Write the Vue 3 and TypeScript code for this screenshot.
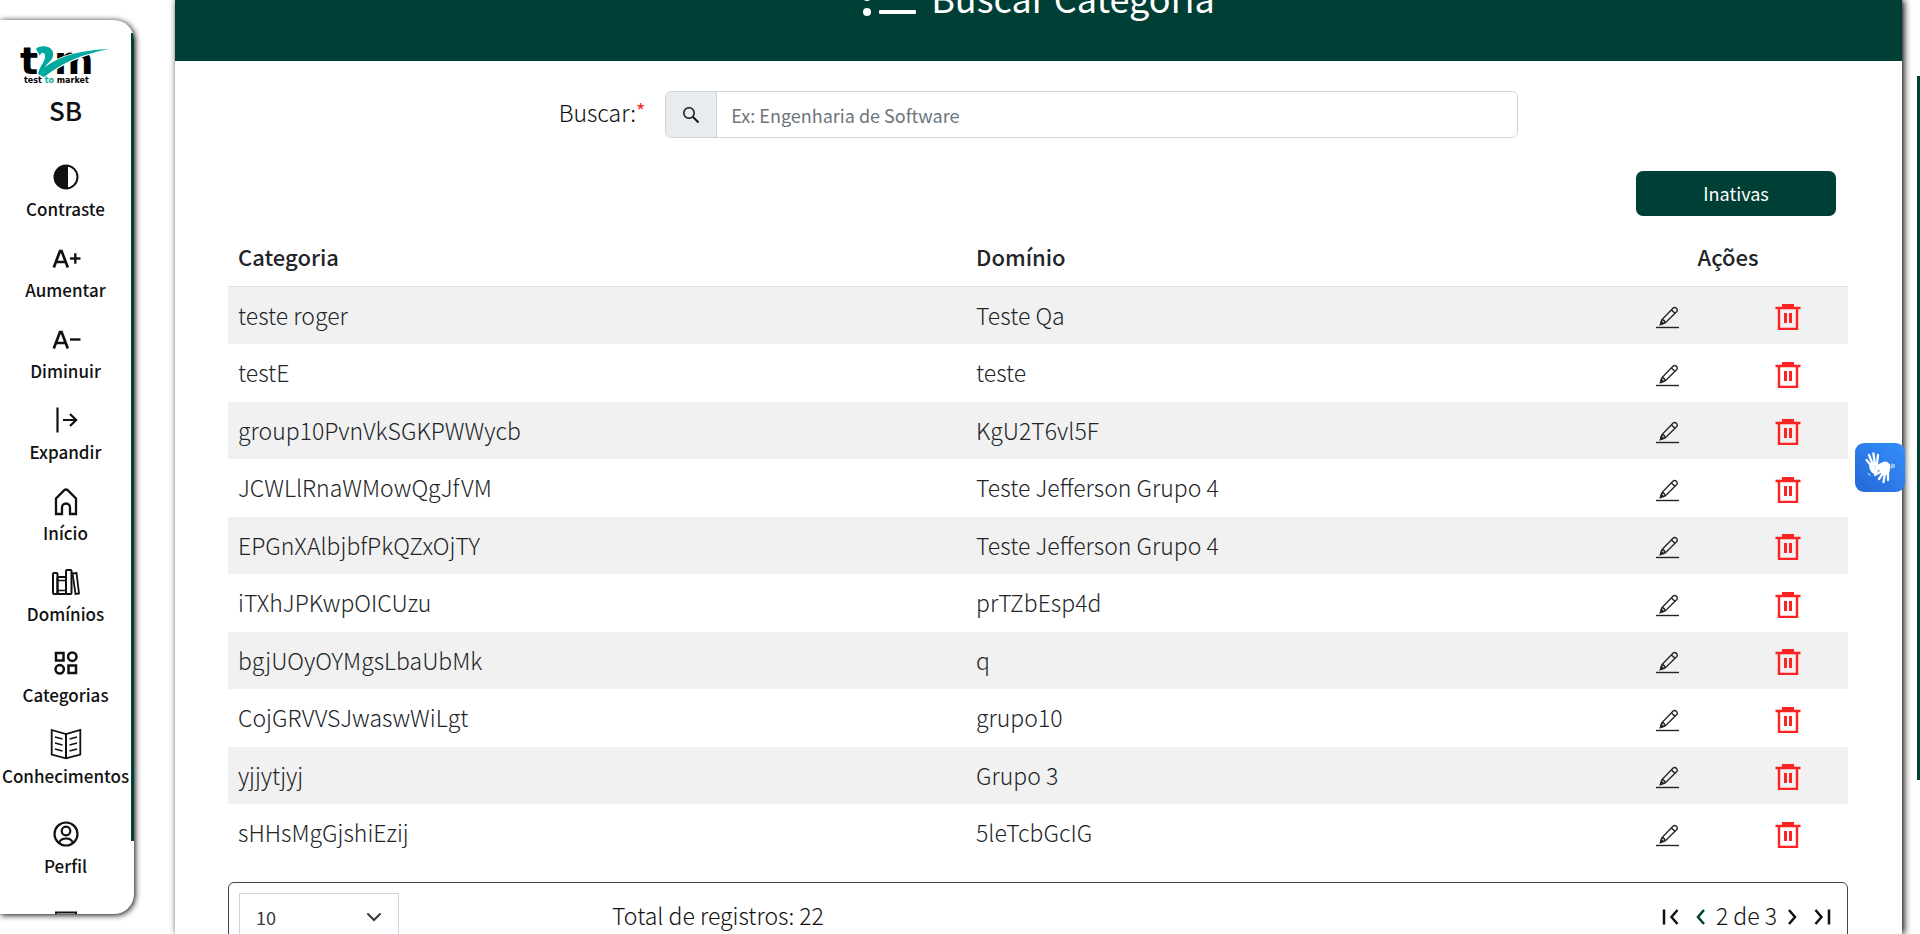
<script setup lang="ts">
interface Row { categoria: string; dominio: string }
interface NavItem { label: string; icon: string }

const rows: Row[] = [
  { categoria: 'teste roger', dominio: 'Teste Qa' },
  { categoria: 'testE', dominio: 'teste' },
  { categoria: 'group10PvnVkSGKPWWycb', dominio: 'KgU2T6vl5F' },
  { categoria: 'JCWLlRnaWMowQgJfVM', dominio: 'Teste Jefferson Grupo 4' },
  { categoria: 'EPGnXAlbjbfPkQZxOjTY', dominio: 'Teste Jefferson Grupo 4' },
  { categoria: 'iTXhJPKwpOICUzu', dominio: 'prTZbEsp4d' },
  { categoria: 'bgjUOyOYMgsLbaUbMk', dominio: 'q' },
  { categoria: 'CojGRVVSJwaswWiLgt', dominio: 'grupo10' },
  { categoria: 'yjjytjyj', dominio: 'Grupo 3' },
  { categoria: 'sHHsMgGjshiEzij', dominio: '5leTcbGcIG' },
]

const items: NavItem[] = [
  { label: 'Contraste', icon: 'contrast' },
  { label: 'Aumentar', icon: 'plus' },
  { label: 'Diminuir', icon: 'minus' },
  { label: 'Expandir', icon: 'expand' },
  { label: 'Início', icon: 'home' },
  { label: 'Domínios', icon: 'books' },
  { label: 'Categorias', icon: 'category' },
  { label: 'Conhecimentos', icon: 'book' },
  { label: 'Perfil', icon: 'user' },
]
</script>

<template>
  <div class="page">
    <aside class="sidebar">
      <nav class="side-scroll">
        <svg class="logo" viewBox="0 0 90 42" role="img" aria-label="t2m test to market">
          <text x="-1" y="29" class="logo-big">t</text>
          <text x="33" y="29" class="logo-big">m</text>
          <path d="M15 4C18 0 31 0 32 8C33 15 27 17 24 22C42 9 64 5 88 4C62 9 42 17 23 32L17 29C19 20 25 16 24 10C23 6 19 8 19 11Z" fill="none" stroke="#fff" stroke-width="2" />
          <path class="teal" d="M15 4C18 0 31 0 32 8C33 15 27 17 24 22C42 9 64 5 88 4C62 9 42 17 23 32L17 29C19 20 25 16 24 10C23 6 19 8 19 11Z" />
          <text x="3" y="38" class="logo-small">test <tspan class="teal">to</tspan> market</text>
        </svg>
        <strong class="initials">SB</strong>
        <a v-for="it in items" :key="it.label" href="#" class="nav-item" :class="{ last: it.icon === 'user' }">
          <svg class="nav-icon" viewBox="0 0 32 32" fill="none" stroke="currentColor" stroke-width="2" aria-hidden="true">
            <template v-if="it.icon === 'contrast'">
              <circle cx="16" cy="16" r="11.5" /><path d="M18 4.5H16a11.5 11.5 0 0 0 0 23h2Z" fill="currentColor" stroke="none" />
            </template>
            <template v-else-if="it.icon === 'plus' || it.icon === 'minus'">
              <path d="M3.800 25.500 10 9h1.600L17.800 25.500M6 20h9.600" stroke-width="2.700" /><path d="M20 16.500h10.500" stroke-width="2.400" />
              <path v-if="it.icon === 'plus'" d="M25.300 11.300v10.400" stroke-width="2.400" />
            </template>
            <path v-else-if="it.icon === 'expand'" d="M7.500 3.500v25M13 16h13M20 10l6.200 6L20 22" stroke-width="2.200" />
            <path v-else-if="it.icon === 'home'" d="M6 29V13.500L14.500 5q1.500-1 3 0L26 13.500V29h-6v-6.500a4 4 0 0 0-8 0V29Z" stroke-width="2.300" />
            <template v-else-if="it.icon === 'books'">
              <rect x="3" y="7" width="4.500" height="21" rx="1" />
              <rect x="7.500" y="11" width="8.500" height="17" rx="1" />
              <path d="M7.500 14.500H16M7.500 24.500H16" stroke-width="1.500" />
              <rect x="16" y="4" width="5.500" height="24" rx="1" />
              <path d="M22.500 7.500 26.500 7 29 27.500 25.500 28Z" stroke-width="1.800" />
            </template>
            <template v-else-if="it.icon === 'category'">
              <path d="M6 6h7.500v7.500H6ZM18.500 18.500H26V26H18.500Z" stroke-width="2.500" />
              <circle cx="22.300" cy="9.700" r="4.200" stroke-width="2.500" /><circle cx="9.700" cy="22.300" r="4.200" stroke-width="2.500" />
            </template>
            <template v-else-if="it.icon === 'book'">
              <path d="M1.700 2 16 6 30.300 2V26.500L16 30.300 1.700 26.500Z" stroke-width="1.800" /><path d="M16 6v24" />
              <path d="m5 9 7.500 2M5 15l7.500 2M5 21l7.500 2M27 9l-7.500 2M27 15l-7.500 2M27 21l-7.500 2" stroke-width="1.700" />
            </template>
            <template v-else>
              <circle cx="16" cy="16" r="11.500" stroke-width="2.200" /><circle cx="16" cy="13" r="4.300" stroke-width="2.200" /><path d="M9 25c1-3 4-4.500 7-4.500s6 1.500 7 4.500" stroke-width="2.200" />
            </template>
          </svg>
          <span>{{ it.label }}</span>
        </a>
        <a href="#" class="nav-item exit" aria-label="Sair">
          <svg class="nav-icon" viewBox="0 0 32 32" fill="none" stroke="currentColor" stroke-width="2" aria-hidden="true"><path d="M6 6.500h20V27H6Z" /></svg>
        </a>
      </nav>
      <i class="side-thumb"></i>
    </aside>

    <main class="panel">
      <header class="banner">
        <svg class="list-icon" viewBox="0 0 54 38" fill="#fff" aria-hidden="true">
          <circle cx="5" cy="4" r="4" /><circle cx="5" cy="19" r="4" /><circle cx="5" cy="34" r="4" />
          <rect x="17" y="2" width="37" height="4" rx="1" /><rect x="17" y="17" width="37" height="4" rx="1" /><rect x="17" y="32" width="37" height="4" rx="1" />
        </svg>
        <h1>Buscar Categoria</h1>
      </header>

      <form class="search" @submit.prevent>
        <label for="busca">Buscar:<sup>*</sup></label>
        <div class="group">
          <button type="submit" class="addon" aria-label="Buscar">
            <svg viewBox="0 0 18 18" fill="none" stroke="currentColor" stroke-width="1.500" aria-hidden="true"><circle cx="7" cy="7" r="5.200" /><path d="m11 11 5.500 5.500" stroke-width="2" /></svg>
          </button>
          <input id="busca" type="text" placeholder="Ex: Engenharia de Software" />
        </div>
      </form>

      <div class="toolbar"><button type="button" class="inactive">Inativas</button></div>

      <table>
        <thead>
          <tr><th class="c1">Categoria</th><th class="c2">Domínio</th><th class="c3" colspan="2">Ações</th></tr>
        </thead>
        <tbody>
          <tr v-for="r in rows" :key="r.categoria">
            <td>{{ r.categoria }}</td>
            <td>{{ r.dominio }}</td>
            <td class="act">
              <button type="button" :aria-label="'Editar ' + r.categoria">
                <svg viewBox="0 0 24 24" fill="none" stroke="currentColor" stroke-width="1.400" aria-hidden="true">
                  <path d="M4.500 19.500 6 14.500 17.200 3c1.900-1.800 5.400 1.500 3.600 3.400L9.200 18Z" /><path d="M15.400 4.900 19 8.300M6 14.500c1.800.3 2.900 1.600 3.200 3.500" /><path d="m4.500 19.500.8-3 2.200 2Z" fill="currentColor" /><path d="M0 22.500h23" />
                </svg>
              </button>
            </td>
            <td class="act">
              <button type="button" class="del" :aria-label="'Excluir ' + r.categoria">
                <svg viewBox="0 0 26 26" fill="currentColor" aria-hidden="true">
                  <path d="M7 0h12v2.700h6.500v2.500H.5V2.700H7Z" /><path d="M2.800 4h20.400v22H2.800ZM5.200 5v18.700h15.600V5Z" fill-rule="evenodd" /><path d="M9 9h3v10H9ZM14 9h3v10h-3Z" />
                </svg>
              </button>
            </td>
          </tr>
        </tbody>
      </table>

      <footer class="pager">
        <div class="size">
          <select aria-label="Registros por página"><option>10</option><option>20</option></select>
          <svg viewBox="0 0 16 16" fill="none" stroke="#343a40" stroke-width="2" stroke-linecap="round" aria-hidden="true"><path d="m2 5 6 6 6-6" /></svg>
        </div>
        <span class="total">Total de registros: 22</span>
        <div class="pages">
          <button type="button" aria-label="Primeira página"><svg viewBox="0 0 18 18"><path d="M2 1.500v15M15.500 2 9.500 9l6 7" /></svg></button>
          <button type="button" class="prev" aria-label="Página anterior"><svg viewBox="0 0 18 18"><path d="M12 2 6 9l6 7" /></svg></button>
          <span>2 de 3</span>
          <button type="button" class="next" aria-label="Próxima página"><svg viewBox="0 0 18 18"><path d="m6 2 6 7-6 7" /></svg></button>
          <button type="button" aria-label="Última página"><svg viewBox="0 0 18 18"><path d="m2.500 2 6 7-6 7M16 1.500v15" /></svg></button>
        </div>
      </footer>
    </main>

    <button type="button" class="libras" aria-label="Libras">
      <svg viewBox="0 0 50 50" fill="none" stroke="#fff" stroke-linecap="round" stroke-linejoin="round" aria-hidden="true">
        <path d="M11.500 17l6 7M14 12l4 10M18.400 10.500l1.600 11M23 12l-1 9" stroke-width="2.300" />
        <path d="M15 21q5-3 8 0l-4 2q0 4 4 4l-2 4q-4 0-6-5Z" fill="#fff" />
        <path d="M21 23l8-4q6 0 6 5 0 5-4 8l-5-2-1-3-4-1Z" fill="#fff" />
        <path d="M27 28l-7 4M28 30l-4 6M30 30l-1.500 9M33 29l0 8" stroke-width="2.300" />
        <path d="M37 21v4M39 21.500v3M13 30.500l2 1.500" stroke-width="1" />
      </svg>
    </button>
    <i class="page-thumb"></i>
  </div>
</template>

<style>
body { margin: 0; overflow: hidden; background: #fff; }
</style>
<style scoped>
* { box-sizing: border-box; }
.page { height: 100vh; display: flex; overflow: hidden; position: relative; background: #fff; color: #212529; font: 300 23px/36px "Noto Sans CJK JP", "Noto Sans", sans-serif; }
button { font: inherit; color: inherit; padding: 0; border: 0; background: none; display: inline-flex; align-items: center; justify-content: center; cursor: pointer; }
svg { display: block; flex: none; }
.sidebar { position: relative; flex: none; width: 134px; margin: 20px 41px 20px 0; border-radius: 0 20px 20px 0; overflow: hidden; box-shadow: 1px 1px 6px #000; background: #fff; }
.side-scroll { width: 131px; height: 100%; overflow: hidden; display: flex; flex-direction: column; align-items: center; color: #111; }
.side-thumb { position: absolute; right: 0; top: 13px; width: 3px; height: 808px; background: #003f35; }
.logo { width: 90px; height: 42px; margin-top: 25px; flex: none; overflow: visible; }
.logo-big { font: 900 38px "DejaVu Sans", sans-serif; fill: #000; }
.logo-small { font: 700 8px "DejaVu Sans", sans-serif; fill: #000; }
.teal { fill: #00a99d; }
.initials { font-size: 26px; line-height: 36px; font-weight: 500; margin: 5px 0 33px; }
.nav-item { flex: none; width: 131px; height: 81px; display: flex; flex-direction: column; align-items: center; color: #111; text-decoration: none; font-size: 17px; line-height: 26px; font-weight: 500; white-space: nowrap; }
.nav-icon { width: 32px; height: 32px; margin-bottom: 3px; }
.nav-item.last { margin-top: 9px; }
.nav-item.exit { margin-top: 7px; }
.panel { flex: 1; min-width: 0; margin-right: 18px; box-shadow: 2px 0 7px #000; background: #fff; }
.banner { height: 61px; background: #003f35; color: #fff; display: flex; align-items: flex-end; justify-content: center; gap: 15px; padding-bottom: 38px; overflow: hidden; }
.banner h1 { margin: 0; font-size: 36px; line-height: 52px; font-weight: 400; }
.list-icon { width: 54px; height: 38px; margin-bottom: 7px; }
.search { display: flex; align-items: center; justify-content: center; gap: 20px; margin-top: 30px; color: #111; }
.search label { padding-bottom: 5px; }
.search sup { color: #f22; font-size: 20px; font-weight: 400; line-height: 0; vertical-align: 3px; }
.group { display: flex; width: 853px; height: 47px; border: 1px solid #ced4da; border-radius: 6px; overflow: hidden; }
.addon { width: 51px; background: #e9ecef; border-right: 1px solid #ced4da; }
.addon svg { width: 18px; height: 18px; }
.group input { flex: 1; min-width: 0; border: 0; outline: 0; padding: 0 14px; font: inherit; font-size: 18px; font-weight: 400; background: #fff; }
.group input::placeholder { color: #6c757d; opacity: 1; }
.toolbar { display: flex; justify-content: flex-end; padding: 33px 66px 0 0; }
.inactive { width: 200px; height: 45px; padding-bottom: 2px; border-radius: 7px; background: #003f35; color: #fff; font-size: 18px; font-weight: 400; }
table { width: calc(100% - 107px); margin: 12px 0 0 53px; border-collapse: separate; border-spacing: 0; table-layout: fixed; }
th { height: 59px; padding: 0 10px 2px; text-align: left; font-weight: 500; font-size: 22px; border-bottom: 1px solid #dee2e6; }
.c1 { width: 738px; }
.c3 { width: 240px; text-align: center; }
td { height: 57px; padding: 0 10px 2px; }
tbody tr:nth-child(even) td { height: 58px; }
tbody tr:nth-child(odd) { background: #f1f1f1; }
td.act { padding: 3px 10px 0; }
.act button { display: flex; margin: 0 auto; }
.act svg { width: 24px; height: 24px; }
.act .del { color: #f22; }
.act .del svg { width: 26px; height: 26px; }
.pager { display: flex; align-items: flex-start; margin: 20px 54px 0 53px; height: 80px; padding: 10px 16px 0 10px; border: 1px solid #444; border-radius: 6px; color: #111; }
.size { display: grid; align-items: center; }
.size > * { grid-area: 1 / 1; }
.size svg { width: 16px; height: 16px; justify-self: end; margin-right: 17px; pointer-events: none; }
select { appearance: none; width: 160px; height: 48px; border: 1px solid #ced4da; border-radius: 0; padding: 0 16px; font: inherit; font-size: 18px; font-weight: 400; background: #fff; color: #343a40; }
.total { margin: 4px auto 0 213px; }
.pages { display: flex; align-items: center; margin-top: 4px; gap: 12px; }
.pages span { margin: 0 -6px; }
.pages svg { width: 18px; height: 18px; margin-top: 4px; fill: none; stroke: #111; stroke-width: 2.500; }
.pages .prev svg { stroke: #003f35; }
.libras { position: absolute; right: 15px; top: 443px; width: 50px; height: 49px; border-radius: 9px; background: linear-gradient(45deg, #2568d6, #3490fc); }
.libras svg { width: 50px; height: 50px; }
.page-thumb { position: absolute; right: 0; top: 76px; width: 3px; height: 704px; background: #003f35; }
</style>
